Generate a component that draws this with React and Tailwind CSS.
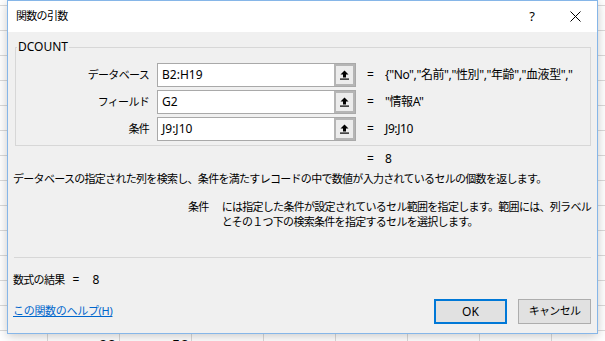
const jp = "tracking-[-0.7px]";

function PickIcon() {
  return (
    <svg width="9" height="10" viewBox="0 0 9 10">
      <path d="M4.5 0.5 L8.5 4.5 L6 4.5 L6 7.5 L3 7.5 L3 4.5 L0.5 4.5 Z" fill="#000" />
      <rect x="0" y="8.5" width="9" height="1.2" fill="#000" />
    </svg>
  );
}

function ArgRow({ label, value, result }) {
  return (
    <div className="flex items-center h-[24px] whitespace-nowrap">
      <div className={`w-[133px] shrink-0 text-right text-[11px] ${jp}`}>{label}</div>
      <div className="ml-[8px] w-[199px] h-[24px] shrink-0 flex border border-[#a9a9a9] bg-white">
        <div className="flex-1 pl-[4px] flex items-center text-[12px]">{value}</div>
        <div className="w-[21px] h-full border-2 border-[#b5b5b5] bg-[#ececec] flex items-center justify-center">
          <PickIcon />
        </div>
      </div>
      <div className="ml-[11px] w-[18px] shrink-0 text-[12px]">=</div>
      <div className="text-[12px] tracking-[-0.4px]">{result}</div>
    </div>
  );
}

export default function App() {
  return (
    <div className="relative w-[605px] h-[341px] overflow-hidden bg-white bg-[linear-gradient(to_bottom,#dadada_1px,transparent_1px),linear-gradient(to_right,#dadada_1px,transparent_1px)] bg-[size:72px_25px] bg-[position:47px_5px] font-['Noto_Sans','Noto_Sans_CJK_JP',sans-serif] text-black">
      {/* sheet row under the dialog */}
      <div className="flex pt-[330px] text-[15px] leading-none">
        <div className="w-[47px]" />
        <div className="w-[72px] pt-[7px] pr-[3px] text-right">90</div>
        <div className="w-[72px] pt-[7px] pr-[2px] text-right">50</div>
      </div>

      {/* dialog */}
      <div className="absolute left-[7px] top-0 w-[591px] h-[334px] border border-[#86b6e8] bg-[#f0f0f0] shadow-[0_2px_10px_rgba(0,0,0,0.22)] flex flex-col">
        <div className="h-[31px] bg-white flex items-center pl-[8px]">
          <span className={`text-[11px] ${jp}`}>関数の引数</span>
          <span className="ml-auto text-[13px] leading-none">?</span>
          <svg className="ml-[35px] mr-[16px]" width="11" height="11" viewBox="0 0 11 11">
            <path d="M0.5 0.5 L10.5 10.5 M10.5 0.5 L0.5 10.5" stroke="#000" strokeWidth="1" />
          </svg>
        </div>

        <div className="flex-1 flex flex-col pl-[5px] pr-[6px]">
          <fieldset className="ml-[2px] mt-[8px] border border-[#d7d7d7] pb-[4px] min-w-0">
            <legend className="ml-[1px] px-[1px] text-[12px] leading-[14px]">DCOUNT</legend>
            <div className="mt-[9px] flex flex-col gap-[3px] overflow-hidden">
              <ArgRow
                label="データベース"
                value="B2:H19"
                result={'{"No","名前","性別","年齢","血液型","'}
              />
              <ArgRow label="フィールド" value="G2" result={'"情報A"'} />
              <ArgRow label="条件" value="J9:J10" result="J9:J10" />
            </div>
          </fieldset>

          <div className="mt-[6px] h-[14px] flex items-center pl-[354px] text-[12px]">
            <span className="w-[18px]">=</span>
            <span>8</span>
          </div>

          <div className={`mt-[6px] h-[14px] flex items-center text-[11px] whitespace-nowrap ${jp}`}>
            データベースの指定された列を検索し、条件を満たすレコードの中で数値が入力されているセルの個数を返します。
          </div>

          <div className={`mt-[13px] flex pl-[175px] text-[11px] leading-[15px] whitespace-nowrap ${jp}`}>
            <div className="w-[34px]">条件</div>
            <div>
              には指定した条件が設定されているセル範囲を指定します。範囲には、列ラベル
              <br />
              とその１つ下の検索条件を指定するセルを選択します。
            </div>
          </div>

          <div className="mt-[28px] ml-[1px] border-t border-[#d7d7d7]" />

          <div className="mt-[15px] h-[14px] flex items-center">
            <span className={`text-[11px] ${jp}`}>数式の結果</span>
            <span className="ml-[8px] text-[12px]">=</span>
            <span className="ml-[13px] text-[12px]">8</span>
          </div>

          <div className="mt-[12px] flex items-center">
            <a href="#" className="text-[11px] tracking-[-0.3px] text-[#0066cc] underline">
              この関数のヘルプ(H)
            </a>
            <button className="ml-auto w-[73px] h-[25px] border-2 border-[#0078d7] bg-[#e1e1e1] text-[12px]">
              OK
            </button>
            <button className={`ml-[11px] w-[73px] h-[25px] border border-[#adadad] bg-[#e1e1e1] text-[11px] ${jp}`}>
              キャンセル
            </button>
          </div>
        </div>
      </div>
    </div>
  );
}
